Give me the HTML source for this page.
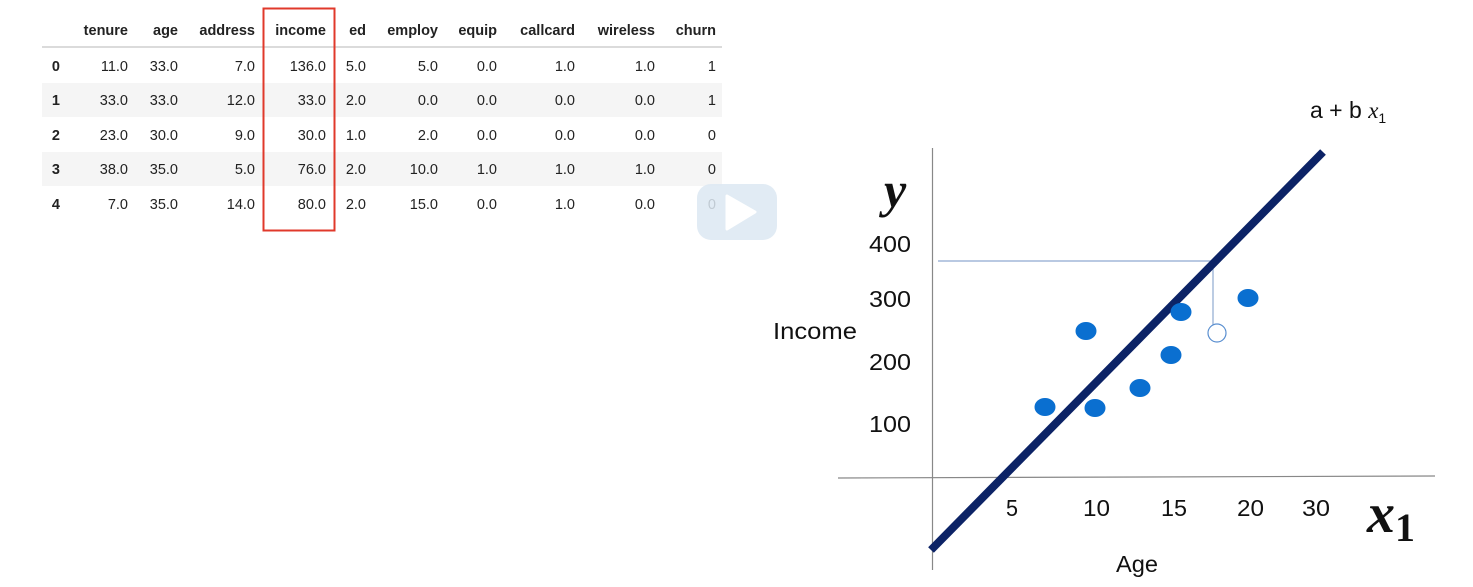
<!DOCTYPE html>
<html><head><meta charset="utf-8"><style>
html,body{margin:0;padding:0;background:#fff;width:1473px;height:587px;overflow:hidden}
svg{display:block}
</style></head><body>
<svg width="1473" height="587" viewBox="0 0 1473 587" xmlns="http://www.w3.org/2000/svg">
<rect width="1473" height="587" fill="#fff"/>
<rect x="42" y="83" width="680" height="34" fill="#f5f5f5"/>
<rect x="42" y="152" width="680" height="34" fill="#f5f5f5"/>
<line x1="42" y1="47" x2="722" y2="47" stroke="#cfcfcf" stroke-width="1.5"/>
<g font-family="Liberation Sans, Arial, sans-serif" font-size="14.5" fill="#222" text-anchor="end">
<g font-weight="bold">
<text x="128" y="35">tenure</text><text x="178" y="35">age</text><text x="255" y="35">address</text><text x="326" y="35">income</text><text x="366" y="35">ed</text><text x="438" y="35">employ</text><text x="497" y="35">equip</text><text x="575" y="35">callcard</text><text x="655" y="35">wireless</text><text x="716" y="35">churn</text>
<text x="60" y="71">0</text><text x="60" y="105">1</text><text x="60" y="140">2</text><text x="60" y="174">3</text><text x="60" y="209">4</text>
</g>
<g>
<text x="128" y="71">11.0</text><text x="178" y="71">33.0</text><text x="255" y="71">7.0</text><text x="326" y="71">136.0</text><text x="366" y="71">5.0</text><text x="438" y="71">5.0</text><text x="497" y="71">0.0</text><text x="575" y="71">1.0</text><text x="655" y="71">1.0</text><text x="716" y="71">1</text>
<text x="128" y="105">33.0</text><text x="178" y="105">33.0</text><text x="255" y="105">12.0</text><text x="326" y="105">33.0</text><text x="366" y="105">2.0</text><text x="438" y="105">0.0</text><text x="497" y="105">0.0</text><text x="575" y="105">0.0</text><text x="655" y="105">0.0</text><text x="716" y="105">1</text>
<text x="128" y="140">23.0</text><text x="178" y="140">30.0</text><text x="255" y="140">9.0</text><text x="326" y="140">30.0</text><text x="366" y="140">1.0</text><text x="438" y="140">2.0</text><text x="497" y="140">0.0</text><text x="575" y="140">0.0</text><text x="655" y="140">0.0</text><text x="716" y="140">0</text>
<text x="128" y="174">38.0</text><text x="178" y="174">35.0</text><text x="255" y="174">5.0</text><text x="326" y="174">76.0</text><text x="366" y="174">2.0</text><text x="438" y="174">10.0</text><text x="497" y="174">1.0</text><text x="575" y="174">1.0</text><text x="655" y="174">1.0</text><text x="716" y="174">0</text>
<text x="128" y="209">7.0</text><text x="178" y="209">35.0</text><text x="255" y="209">14.0</text><text x="326" y="209">80.0</text><text x="366" y="209">2.0</text><text x="438" y="209">15.0</text><text x="497" y="209">0.0</text><text x="575" y="209">1.0</text><text x="655" y="209">0.0</text><text x="716" y="209">0</text>
</g></g>
<rect x="263.5" y="8.5" width="71" height="222" fill="none" stroke="#e0392b" stroke-width="2"/>
<rect x="697" y="184" width="80" height="56" rx="14" fill="#dce8f2" opacity="0.85"/>
<path d="M727 196 L755 212 L727 229 Z" fill="#fff" stroke="#fff" stroke-width="3" stroke-linejoin="round"/>
<line x1="932.5" y1="148" x2="932.5" y2="570" stroke="#888" stroke-width="1.2"/>
<line x1="838" y1="478" x2="1435" y2="476" stroke="#888" stroke-width="1.2"/>
<line x1="938" y1="261" x2="1212" y2="261" stroke="#8fa9d0" stroke-width="1.2"/>
<line x1="1213" y1="261" x2="1213" y2="326" stroke="#8fa9d0" stroke-width="1.2"/>
<circle cx="1217" cy="333" r="9" fill="#fff" stroke="#5a8fd0" stroke-width="1.2"/>
<line x1="931" y1="550" x2="1323" y2="152" stroke="#0c2366" stroke-width="8"/>
<g fill="#0a6fd0">
<ellipse cx="1045" cy="407" rx="10.5" ry="9"/><ellipse cx="1086" cy="331" rx="10.5" ry="9"/><ellipse cx="1095" cy="408" rx="10.5" ry="9"/><ellipse cx="1140" cy="388" rx="10.5" ry="9"/><ellipse cx="1171" cy="355" rx="10.5" ry="9"/><ellipse cx="1181" cy="312" rx="10.5" ry="9"/><ellipse cx="1248" cy="298" rx="10.5" ry="9"/>
</g>
<g font-family="Liberation Sans, sans-serif" font-size="23" fill="#111" lengthAdjust="spacingAndGlyphs">
<text x="869" y="252" textLength="42" lengthAdjust="spacingAndGlyphs">400</text>
<text x="869" y="307" textLength="42" lengthAdjust="spacingAndGlyphs">300</text>
<text x="869" y="370" textLength="42" lengthAdjust="spacingAndGlyphs">200</text>
<text x="869" y="432" textLength="42" lengthAdjust="spacingAndGlyphs">100</text>
<text x="1006" y="516" textLength="12" lengthAdjust="spacingAndGlyphs">5</text>
<text x="1083" y="516" textLength="27" lengthAdjust="spacingAndGlyphs">10</text>
<text x="1161" y="516" textLength="26" lengthAdjust="spacingAndGlyphs">15</text>
<text x="1237" y="516" textLength="27" lengthAdjust="spacingAndGlyphs">20</text>
<text x="1302" y="516" textLength="28" lengthAdjust="spacingAndGlyphs">30</text>
<text x="773" y="339" textLength="84" lengthAdjust="spacingAndGlyphs">Income</text>
<text x="1116" y="572" textLength="42" lengthAdjust="spacingAndGlyphs">Age</text>
<text x="1310" y="118">a + b <tspan font-family="Liberation Serif, serif" font-style="italic">x</tspan><tspan font-size="14" dy="5">1</tspan></text>
</g>
<text x="884" y="207" font-family="Liberation Serif, serif" font-style="italic" font-weight="bold" font-size="50" fill="#111">y</text>
<text x="1367" y="532" font-family="Liberation Serif, serif" font-style="italic" font-weight="bold" font-size="56" fill="#111">x<tspan font-style="normal" font-size="40" dy="9">1</tspan></text>
</svg>
</body></html>
